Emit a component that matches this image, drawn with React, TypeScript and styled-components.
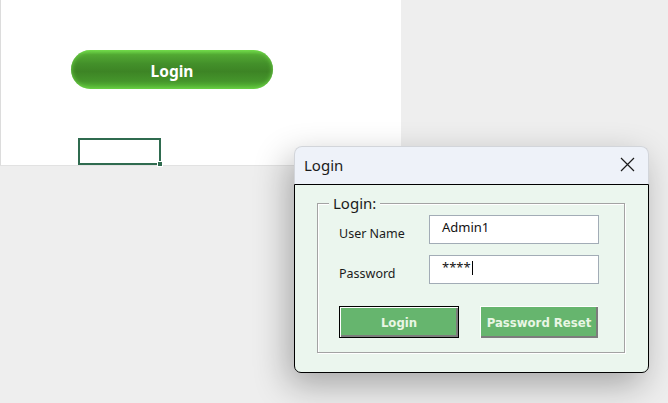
import React from "react";
import styled, { createGlobalStyle } from "styled-components";

const Global = createGlobalStyle`
  html, body { margin: 0; padding: 0; }
  body {
    background: #eeeeee;
    width: 668px;
    height: 403px;
    overflow: hidden;
    font-family: "Noto Sans", "Open Sans", sans-serif;
  }
`;

const Page = styled.div`
  position: relative;
  width: 668px;
  height: 403px;
  background: #eeeeee;
`;

const Sheet = styled.div`
  box-sizing: border-box;
  width: 401px;
  height: 166px;
  background: #ffffff;
  border-left: 1px solid #dcdcdc;
  border-bottom: 1px solid #e2e2e2;
  padding: 50px 0 0 70px;
  display: flex;
  flex-direction: column;
  align-items: flex-start;
`;

const PillButton = styled.button`
  width: 202px;
  height: 40px;
  border: none;
  border-radius: 20px;
  background: linear-gradient(
    to bottom,
    #6cd646 0%,
    #52a833 12%,
    #43902a 35%,
    #3d8425 55%,
    #45952b 80%,
    #5dc23a 100%
  );
  box-shadow: inset 0 0 5px rgba(120, 225, 80, 0.9);
  color: #ffffff;
  font-family: "Noto Sans", sans-serif;
  font-weight: 700;
  font-size: 15.5px;
  padding: 2px 0 0;
`;

const Cell = styled.div`
  position: relative;
  box-sizing: border-box;
  width: 83px;
  height: 27px;
  margin: 49px 0 0 7px;
  border: 2px solid #2f6b4f;
`;

const FillHandle = styled.span`
  position: absolute;
  right: -4px;
  bottom: -4px;
  width: 6px;
  height: 6px;
  background: #2f6b4f;
  border: 1px solid #ffffff;
  box-sizing: border-box;
`;

const Window = styled.div`
  position: absolute;
  left: 294px;
  top: 146px;
  width: 355px;
  border-radius: 8px;
  box-shadow: -6px 12px 34px rgba(0, 0, 0, 0.3);
  display: flex;
  flex-direction: column;
`;

const TitleBar = styled.div`
  box-sizing: border-box;
  height: 38px;
  background: #eef2f9;
  border: 1px solid #d2d5da;
  border-bottom: none;
  border-radius: 8px 8px 0 0;
  display: flex;
  align-items: center;
  justify-content: space-between;
  padding: 0 13px 2px 9px;
`;

const Title = styled.span`
  font-family: "Noto Sans", sans-serif;
  font-size: 15px;
  color: #1b1b1b;
`;

const CloseIcon = styled.svg`
  width: 15px;
  height: 15px;
  display: block;
`;

const Body = styled.div`
  box-sizing: border-box;
  height: 189px;
  background: #ebf6ee;
  border: 1px solid #000000;
  border-radius: 0 0 7px 7px;
  padding: 9px 0 0 22px;
`;

const Group = styled.fieldset`
  box-sizing: border-box;
  width: 308px;
  margin: 0;
  padding: 3px 0 14px 21px;
  border: 1px solid #a3a3a3;
  box-shadow: 1px 1px 0 #ffffff, inset 1px 1px 0 #ffffff;
`;

const Legend = styled.legend`
  margin-left: -10px;
  padding: 0 4px;
  font-family: "Noto Sans", sans-serif;
  font-size: 15px;
  line-height: 18px;
  color: #1b1b1b;
  background: #ebf6ee;
`;

const FormGrid = styled.div`
  display: grid;
  grid-template-columns: 90px 170px;
  grid-auto-rows: 29px;
  row-gap: 11px;
`;

const Label = styled.label`
  align-self: end;
  padding-bottom: 2px;
  font-family: "Noto Sans", sans-serif;
  font-size: 12.5px;
  line-height: 16px;
  color: #1b1b1b;
`;

const Field = styled.div`
  box-sizing: border-box;
  height: 29px;
  background: #ffffff;
  border: 1px solid #a2acb6;
  padding: 3px 0 0 12px;
  font-family: "Noto Sans", sans-serif;
  font-size: 13px;
  line-height: 17px;
  color: #111111;
  display: flex;
  align-items: flex-start;
`;

const Caret = styled.span`
  display: inline-block;
  width: 1px;
  height: 14px;
  margin: 2px 0 0 1px;
  background: #000000;
`;

const ButtonRow = styled.div`
  display: flex;
  gap: 21px;
  margin-top: 22px;
`;

const DialogButton = styled.button<{ $default?: boolean }>`
  box-sizing: border-box;
  width: ${(p) => (p.$default ? "120px" : "118px")};
  height: 32px;
  padding: 0;
  background: #66b56e;
  color: #e9f6e4;
  font-family: "DejaVu Sans Condensed", "DejaVu Sans", sans-serif;
  font-weight: 700;
  font-size: 13px;
  border: ${(p) => (p.$default ? "1px solid #000000" : "none")};
  box-shadow: inset 1px 1px 0 #ffffff, inset -2px -2px 0 #7c7c7c;
`;

export default function App() {
  return (
    <Page>
      <Global />
      <Sheet>
        <PillButton>Login</PillButton>
        <Cell>
          <FillHandle />
        </Cell>
      </Sheet>
      <Window>
        <TitleBar>
          <Title>Login</Title>
          <CloseIcon viewBox="0 0 15 15">
            <path d="M1 1 L14 14 M14 1 L1 14" stroke="#1b1b1b" strokeWidth="1.2" fill="none" />
          </CloseIcon>
        </TitleBar>
        <Body>
          <Group>
            <Legend>Login:</Legend>
            <FormGrid>
              <Label>User Name</Label>
              <Field>Admin1</Field>
              <Label>Password</Label>
              <Field>
                ****
                <Caret />
              </Field>
            </FormGrid>
            <ButtonRow>
              <DialogButton $default>Login</DialogButton>
              <DialogButton>Password Reset</DialogButton>
            </ButtonRow>
          </Group>
        </Body>
      </Window>
    </Page>
  );
}
